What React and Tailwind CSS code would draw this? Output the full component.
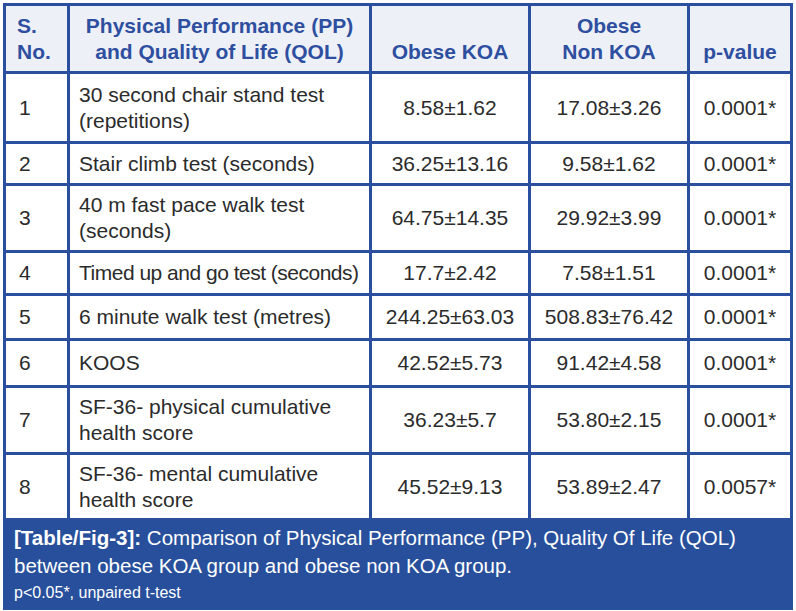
import React from 'react';

const rows = [
  { no: '1', label: ['30 second chair stand test', '(repetitions)'], koa: '8.58±1.62', non: '17.08±3.26', p: '0.0001*', h: 'h-[70px]' },
  { no: '2', label: ['Stair climb test (seconds)'], koa: '36.25±13.16', non: '9.58±1.62', p: '0.0001*', h: 'h-[42px]' },
  { no: '3', label: ['40 m fast pace walk test', '(seconds)'], koa: '64.75±14.35', non: '29.92±3.99', p: '0.0001*', h: 'h-[67px]' },
  { no: '4', label: ['Timed up and go test (seconds)'], koa: '17.7±2.42', non: '7.58±1.51', p: '0.0001*', h: 'h-[43px]', tight: true },
  { no: '5', label: ['6 minute walk test (metres)'], koa: '244.25±63.03', non: '508.83±76.42', p: '0.0001*', h: 'h-[45px]' },
  { no: '6', label: ['KOOS'], koa: '42.52±5.73', non: '91.42±4.58', p: '0.0001*', h: 'h-[47px]' },
  { no: '7', label: ['SF-36- physical cumulative', 'health score'], koa: '36.23±5.7', non: '53.80±2.15', p: '0.0001*', h: 'h-[67px]' },
  { no: '8', label: ['SF-36- mental cumulative', 'health score'], koa: '45.52±9.13', non: '53.89±2.47', p: '0.0057*', h: 'h-[66px]' },
];

const cell = 'border-[3px] border-[#2a4f9f]';

export default function App() {
  return (
    <div className="min-h-screen bg-white" style={{ fontFamily: '"Liberation Sans", Arial, sans-serif' }}>
      <div className="ml-[3px] pt-[3px] w-[790px]">
        <table className="w-full table-fixed border-collapse text-[21px] leading-[26px] text-[#2b2b2b]">
          <colgroup>
            <col className="w-[64px]" />
            <col className="w-[302px]" />
            <col className="w-[159px]" />
            <col className="w-[159px]" />
            <col />
          </colgroup>
          <thead>
            <tr className="h-[68px] bg-[#eef0f8] text-[#2e4f9f] text-[21px]">
              <th className={`${cell} align-bottom text-left pl-[11px] pb-[6px] font-bold`}>S.<br />No.</th>
              <th className={`${cell} align-bottom text-center pb-[6px] font-bold whitespace-nowrap`}>Physical Performance (PP)<br />and Quality of Life (QOL)</th>
              <th className={`${cell} align-bottom text-center pb-[6px] font-bold`}>Obese KOA</th>
              <th className={`${cell} align-bottom text-center pb-[6px] font-bold`}>Obese<br />Non KOA</th>
              <th className={`${cell} align-bottom text-center pb-[6px] font-bold`}>p-value</th>
            </tr>
          </thead>
          <tbody>
            {rows.map((r) => (
              <tr key={r.no} className={r.h}>
                <td className={`${cell} pl-[13px] align-middle`}>{r.no}</td>
                <td className={`${cell} pl-[9px] align-middle whitespace-nowrap ${r.tight ? 'tracking-[-0.5px]' : ''}`}>
                  {r.label.map((l, i) => (
                    <div key={i}>{l}</div>
                  ))}
                </td>
                <td className={`${cell} text-center align-middle`}>{r.koa}</td>
                <td className={`${cell} text-center align-middle`}>{r.non}</td>
                <td className={`${cell} text-center align-middle`}>{r.p}</td>
              </tr>
            ))}
          </tbody>
        </table>
        <div className="bg-[#274f9c] text-white px-[11px] pt-[3px] h-[89px]">
          <p className="text-[20.5px] leading-[28px]">
            <span className="font-bold">[Table/Fig-3]:</span> Comparison of Physical Performance (PP), Quality Of Life (QOL)
            <br />
            between obese KOA group and obese non KOA group.
          </p>
          <p className="text-[16px] leading-[26px]">p&lt;0.05*, unpaired t-test</p>
        </div>
      </div>
    </div>
  );
}
